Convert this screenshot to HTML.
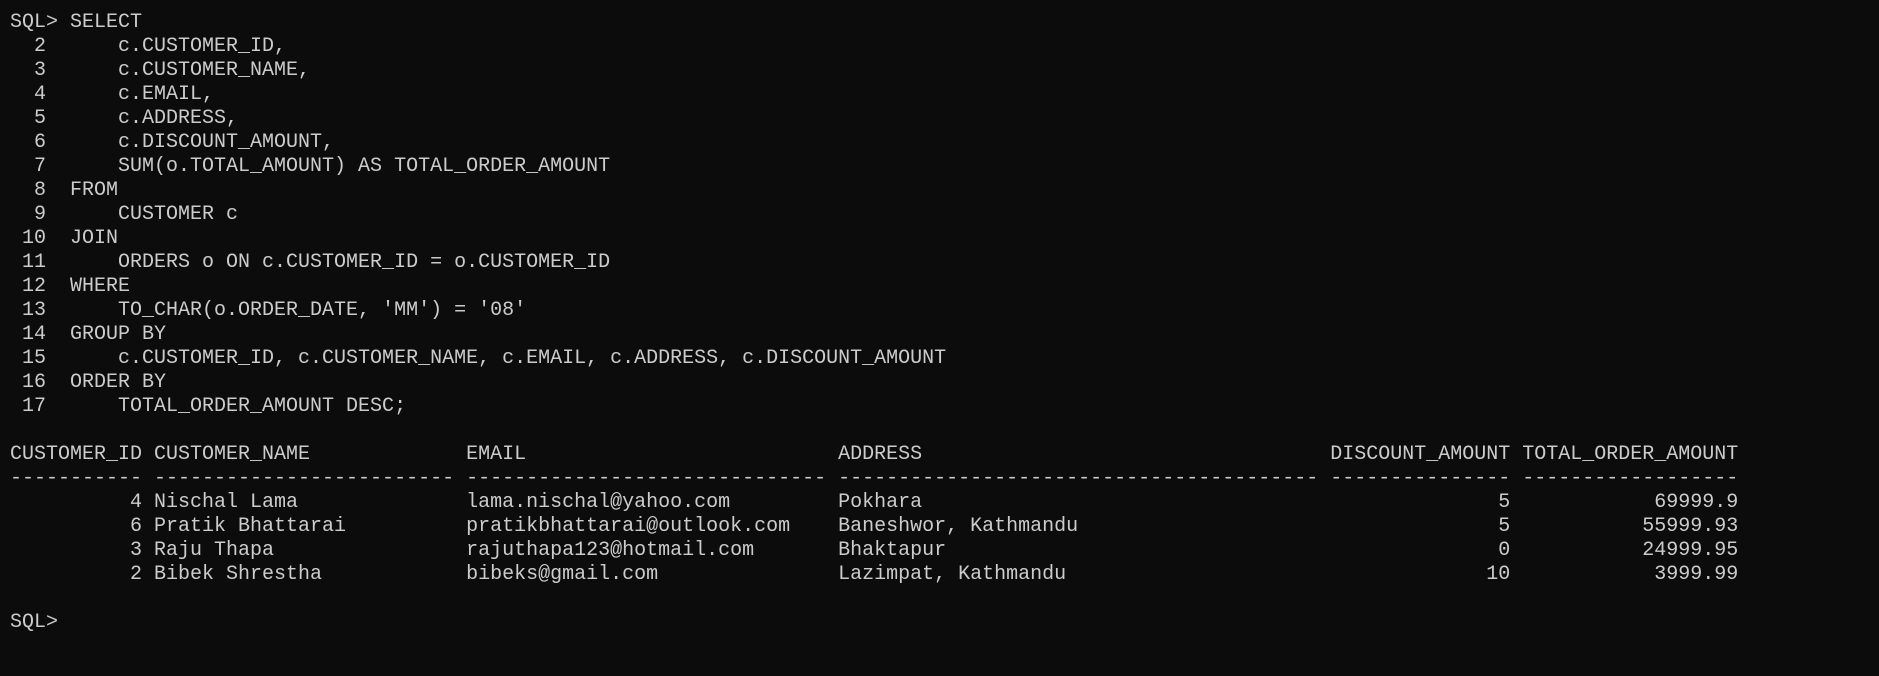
<!DOCTYPE html>
<html><head><meta charset="utf-8"><style>
html,body{margin:0;padding:0;background:#0c0c0c;width:1879px;height:676px;overflow:hidden}
pre{margin:0;padding:11px 0 0 10px;font-family:"Liberation Mono",monospace;font-size:20px;line-height:24px;color:#cccccc}
</style></head><body><pre>SQL&gt; SELECT
  2      c.CUSTOMER_ID,
  3      c.CUSTOMER_NAME,
  4      c.EMAIL,
  5      c.ADDRESS,
  6      c.DISCOUNT_AMOUNT,
  7      SUM(o.TOTAL_AMOUNT) AS TOTAL_ORDER_AMOUNT
  8  FROM
  9      CUSTOMER c
 10  JOIN
 11      ORDERS o ON c.CUSTOMER_ID = o.CUSTOMER_ID
 12  WHERE
 13      TO_CHAR(o.ORDER_DATE, 'MM') = '08'
 14  GROUP BY
 15      c.CUSTOMER_ID, c.CUSTOMER_NAME, c.EMAIL, c.ADDRESS, c.DISCOUNT_AMOUNT
 16  ORDER BY
 17      TOTAL_ORDER_AMOUNT DESC;

CUSTOMER_ID CUSTOMER_NAME             EMAIL                          ADDRESS                                  DISCOUNT_AMOUNT TOTAL_ORDER_AMOUNT
----------- ------------------------- ------------------------------ ---------------------------------------- --------------- ------------------
          4 Nischal Lama              lama.nischal@yahoo.com         Pokhara                                                5            69999.9
          6 Pratik Bhattarai          pratikbhattarai@outlook.com    Baneshwor, Kathmandu                                   5           55999.93
          3 Raju Thapa                rajuthapa123@hotmail.com       Bhaktapur                                              0           24999.95
          2 Bibek Shrestha            bibeks@gmail.com               Lazimpat, Kathmandu                                   10            3999.99

SQL&gt;
</pre></body></html>
